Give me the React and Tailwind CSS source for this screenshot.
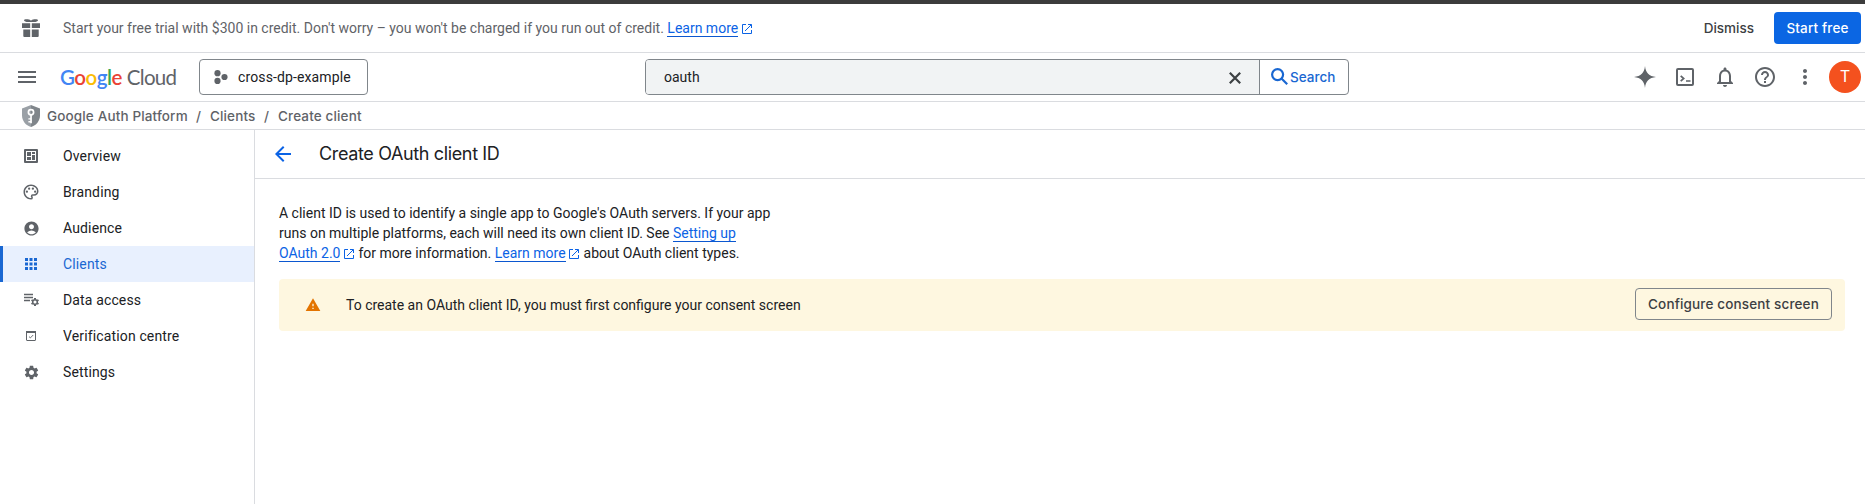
import React from 'react';
import {
  MdMenu, MdOutlinePalette, MdAccountCircle, MdApps, MdSettings, MdWarning,
  MdHelpOutline, MdMoreVert, MdNotificationsNone, MdArrowBack,
} from 'react-icons/md';

const External = () => (
  <svg className="ml-[3.4px] mr-[1.1px] inline-block h-[10px] w-[10px] align-[-0.5px]" viewBox="0 0 10 10" fill="none" stroke="currentColor">
    <path d="M4 .5H.5v9h9V6M6 .5h3.5V4M9.3.7 3 7" />
  </svg>
);

const Link = ({ children }) => (
  <span className="border-b border-[#0b57d0] text-[#0b63e5]">{children}</span>
);

const Gift = () => (
  <svg className="h-[18px] w-[18px]" viewBox="0 0 18 18" fill="#5f6368">
    <path d="M0 4.2h8.2V9H0zM9.8 4.2H18V9H9.8zM1.3 10.4h6.9V18H2.3a1 1 0 0 1-1-1zM9.8 10.4h6.9V17a1 1 0 0 1-1 1H9.8z" />
    <path d="M2 1.2C2 .2 4 0 5.800.2 7.600.4 8.400 1 9 1.700 9.600 1 10.400.4 12.200.2 14 0 16 .2 16 1.200 16 2.400 14 3 12 3H6C4 3 2 2.400 2 1.200z" />
  </svg>
);

const Overview = () => (
  <svg className="h-[14px] w-[14px]" viewBox="0 0 14 14" fill="#5f6368">
    <path fillRule="evenodd" d="M1 0h12a1 1 0 0 1 1 1v12a1 1 0 0 1-1 1H1a1 1 0 0 1-1-1V1a1 1 0 0 1 1-1zM2 2v10h10V2z" />
    <path d="M3 3h4v4H3zM8 3h3v2H8zM8 6h3v5H8zM3 8h4v3H3z" />
  </svg>
);

const DataAccess = () => (
  <svg className="h-[14px] w-4" viewBox="0 0 16 14" fill="none" stroke="#5f6368">
    <path d="M1 1.500h9M1 4.500h9M1 7.500h6" strokeWidth="1.300" />
    <circle cx="12" cy="9" r="2.300" strokeWidth="1.500" />
    <path d="M12 5v1.500M12 11.500V13M8.500 7l1.300.75M14.200 10.250l1.300.75M8.500 11l1.300-.75M14.200 7.750l1.300-.75" strokeWidth="2" />
  </svg>
);

const Verification = () => (
  <svg className="h-[10px] w-[10px]" viewBox="0 0 10 10" fill="none" stroke="#5f6368">
    <rect x=".5" y=".5" width="9" height="9" rx=".5" />
    <path d="M0 1h10" strokeWidth="2" />
    <path d="m3 5.600 1.400 1.300L7.200 4" strokeWidth=".9" />
  </svg>
);

const Shield = () => (
  <svg className="h-[22px] w-[18px]" viewBox="0 0 18 22">
    <path d="M9 0 0 3.400v7C0 15.800 3.800 20.400 9 22z" fill="#9aa0a6" />
    <path d="m9 0 9 3.400v7C18 15.800 14.200 20.400 9 22z" fill="#80868b" />
    <circle cx="9" cy="7.300" r="2.600" fill="none" stroke="#fff" strokeWidth="1.700" />
    <path d="M8.200 9.800h1.700v8.400H8.200zM6.400 13.200h2v1.400h-2zM6.400 16h2v1.400h-2z" fill="#fff" />
  </svg>
);

const nav = [
  ['Overview', <Overview />],
  ['Branding', <MdOutlinePalette size={18} />],
  ['Audience', <MdAccountCircle size={17} />],
  ['Clients', <MdApps size={18} />],
  ['Data access', <DataAccess />],
  ['Verification centre', <Verification />],
  ['Settings', <MdSettings size={17} />],
];

export default function App() {
  return (
    <div className="flex h-[504px] w-[1865px] flex-col overflow-hidden bg-white font-['Roboto',sans-serif] text-sm text-[#202124]">
      <div className="h-1 shrink-0 bg-[#3c3c3c]" />

      <div className="flex h-[49px] shrink-0 items-center border-b border-[#dadce0] pl-[22px] pr-1 text-[#5f6368]">
        <Gift />
        <p className="ml-[23px] whitespace-nowrap">
          Start your free trial with $300 in credit. Don't worry – you won't be charged if you run out of credit.{' '}
          <Link>Learn more</Link><span className="text-[#0b63e5]"><External /></span>
        </p>
        <button className="ml-auto mr-5 pt-0.5 font-['Inter',sans-serif] text-[13.5px] font-medium text-[#3c4043]">Dismiss</button>
        <button className="h-8 w-[87px] rounded bg-[#0b66e3] pt-px font-['Inter',sans-serif] text-[13.5px] font-medium tracking-[0.15px] text-white">Start free</button>
      </div>

      <header className="flex h-[49px] shrink-0 items-center border-b border-[#dadce0] pl-[15px] pr-1">
        <MdMenu size={24} color="#5f6368" />
        <div className="ml-[21px] flex w-[118px] items-baseline whitespace-nowrap font-['Lato',sans-serif] text-[20.5px] leading-6">
          <span className="font-semibold tracking-[-0.5px]">
            <span className="text-[#4285f4]">G</span><span className="text-[#ea4335]">o</span><span className="text-[#fbbc04]">o</span><span className="text-[#4285f4]">g</span><span className="text-[#34a853]">l</span><span className="text-[#ea4335]">e</span>
          </span>
          <span className="ml-[5px] tracking-[-0.7px] text-[#5f6368]">Cloud</span>
        </div>
        <button className="ml-[21px] flex h-9 w-[169px] items-center rounded border border-[#80868b] pl-[14px]">
          <svg className="h-[14px] w-[14px]" viewBox="0 0 14 14" fill="#5f6368">
            <circle cx="3.500" cy="3.200" r="3.100" /><circle cx="10.500" cy="7" r="3.100" /><circle cx="3.500" cy="10.900" r="3.100" />
          </svg>
          <span className="ml-[10px] tracking-[0.12px]">cross-dp-example</span>
        </button>
        <div className="ml-[277px] flex h-9 w-[704px] overflow-hidden rounded border border-[#80868b]">
          <div className="flex w-[613px] items-center bg-[#f1f3f4] pl-[18px] pr-[18px]">
            <span>oauth</span>
            <svg className="ml-auto mt-0.5 h-3 w-3" viewBox="0 0 12 12" fill="none" stroke="#3c4043" strokeWidth="2.2">
              <path d="m.8.8 10.400 10.400M11.200.8.8 11.200" />
            </svg>
          </div>
          <button className="flex flex-1 items-center border-l border-[#80868b] pl-[11px] font-['Inter',sans-serif] text-[13.5px] font-medium text-[#1967d2]">
            <svg className="-mt-0.5 h-[17px] w-[17px]" viewBox="0 0 17 17" fill="none" stroke="currentColor" strokeWidth="2.2">
              <circle cx="6.600" cy="6.600" r="5.500" /><path d="m10.500 10.500 5.700 5.700" />
            </svg>
            <span className="ml-0.5 pt-px">Search</span>
          </button>
        </div>
        <div className="ml-auto flex items-center gap-4 text-[#5f6368]">
          <svg className="h-6 w-6" viewBox="0 0 24 24" fill="currentColor"><path d="M12 1c.7 7 4 10.300 11 11-7 .7-10.300 4-11 11-.7-7-4-10.300-11-11 7-.7 10.300-4 11-11z" /></svg>
          <svg className="h-6 w-6" viewBox="0 0 24 24" fill="none" stroke="currentColor" strokeWidth="2">
            <rect x="4" y="4" width="16" height="16" rx="1" /><path d="m7.700 10.800 3 2.700-3 2.700M13 16h4.500" strokeWidth="1.700" />
          </svg>
          <MdNotificationsNone size={24} />
          <MdHelpOutline size={24} />
          <MdMoreVert size={24} />
          <span className="-ml-1 flex h-8 w-8 items-center justify-center rounded-full bg-[#f4511e] text-base text-white">T</span>
        </div>
      </header>

      <div className="flex h-7 shrink-0 items-center border-b border-[#dadce0] pl-[22px] font-['Inter',sans-serif] text-[13.5px] font-medium text-[#5f6368]">
        <Shield />
        <div className="ml-[7px] flex whitespace-nowrap pt-0.5 tracking-[0.14px]">
          <span className="w-[141px]">Google Auth Platform</span>
          <span className="ml-2 w-[14px]">/</span>
          <span className="w-[46px]">Clients</span>
          <span className="ml-2 w-[14px]">/</span>
          <span>Create client</span>
        </div>
      </div>

      <div className="flex min-h-0 flex-1">
        <nav className="w-[255px] shrink-0 border-r border-[#dadce0] pt-2">
          {nav.map(([label, icon]) => (
            <div
              key={label}
              className={label === 'Clients'
                ? 'flex h-9 items-center border-l-[3px] border-[#1967d2] bg-[#e8f0fe] pl-[19px] text-[#1967d2]'
                : 'flex h-9 items-center pl-[22px]'}
            >
              <span className={label === 'Clients' ? 'flex w-[18px] justify-center' : 'flex w-[18px] justify-center text-[#5f6368]'}>{icon}</span>
              <span className="ml-[23px] tracking-[0.14px]">{label}</span>
            </div>
          ))}
        </nav>

        <main className="min-w-0 flex-1">
          <div className="flex h-[49px] items-center border-b border-[#dadce0] pl-4">
            <MdArrowBack size={24} color="#0b63e5" />
            <h1 className="ml-6 font-['Inter',sans-serif] text-[18px] tracking-[-0.36px]">Create OAuth client ID</h1>
          </div>
          <div className="pl-6 pr-5 pt-6">
            <p className="whitespace-nowrap leading-5">
              A client ID is used to identify a single app to Google's OAuth servers. If your app<br />
              runs on multiple platforms, each will need its own client ID. See <Link>Setting up</Link><br />
              <Link>OAuth 2.0</Link><span className="text-[#0b63e5]"><External /></span> for more information. <Link>Learn more</Link><span className="text-[#0b63e5]"><External /></span> about OAuth client types.
            </p>
            <div className="mt-4 flex h-[52px] items-center rounded bg-[#fef7e0] pl-[26px] pr-[13px]">
              <MdWarning size={16} color="#e37400" />
              <span className="ml-[25px]">To create an OAuth client ID, you must first configure your consent screen</span>
              <button className="mb-0.5 ml-auto h-8 w-[197px] rounded border border-[#80868b] pt-0.5 font-['Inter',sans-serif] text-[13.5px] font-medium tracking-[0.15px] text-[#3c4043]">Configure consent screen</button>
            </div>
          </div>
        </main>
      </div>
    </div>
  );
}
